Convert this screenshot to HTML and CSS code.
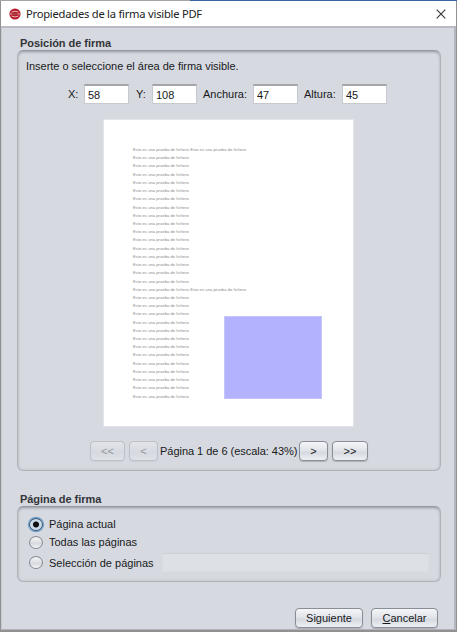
FILE: index.html
```html
<!DOCTYPE html>
<html lang="es">
<head>
<meta charset="utf-8">
<title>Propiedades de la firma visible PDF</title>
<link rel="stylesheet" href="styles.css">
</head>
<body>
<div class="window">
  <header class="titlebar">
    <svg class="logo" width="12" height="12" viewBox="0 0 12 12">
      <circle cx="6" cy="6" r="5.6" fill="#b51d2b"/>
      <path d="M2.6 4.1Q6 2.3 9.4 4.1M1 6H11M2.6 8.1Q6 9.7 9.4 8.1" fill="none" stroke="#f0c4c8" stroke-width=".9"/>
      <path d="M3 6H9" stroke="#8e1320" stroke-width="1"/>
    </svg>
    <h1 class="title">Propiedades de la firma visible PDF</h1>
    <svg class="close" width="10" height="10" viewBox="0 0 10 10"><path d="M.7.7 9.3 9.3M9.3.7.7 9.3" stroke="#333" stroke-width="1.1"/></svg>
  </header>
  <main class="content">
    <h2 class="legend">Posición de firma</h2>
    <section class="panel position">
      <p class="hint">Inserte o seleccione el área de firma visible.</p>
      <div class="fields">
        <label class="lx">X:</label><input value="58">
        <label class="ly">Y:</label><input value="108">
        <label class="lw">Anchura:</label><input value="47">
        <label class="lh">Altura:</label><input value="45">
      </div>
      <div class="page">
        <div class="lines" id="lines"></div>
        <div class="signature"></div>
      </div>
      <div class="pager">
        <button class="first" disabled>&lt;&lt;</button>
        <button class="prev" disabled>&lt;</button>
        <span class="status">Página 1 de 6 (escala: 43%)</span>
        <button class="next">&gt;</button>
        <button class="last">&gt;&gt;</button>
      </div>
    </section>
    <h2 class="legend second">Página de firma</h2>
    <section class="panel choice">
      <label class="option"><i class="radio on"></i><span>Página actual</span></label>
      <label class="option"><i class="radio"></i><span>Todas las páginas</span></label>
      <label class="option last-option"><i class="radio"></i><span>Selección de páginas</span><input class="range" disabled></label>
    </section>
    <footer class="actions">
      <button class="go">Siguiente</button>
      <button class="cancel"><u>C</u>ancelar</button>
    </footer>
  </main>
</div>
<script src="lines.js"></script>
</body>
</html>
```
FILE: lines.js
```js
const sentence = "Esto es una prueba de fichero";
const box = document.getElementById("lines");
for (let i = 0; i < 31; i++) {
  const row = document.createElement("p");
  row.className = "line";
  const copies = i === 0 || i === 17 ? 2 : 1;
  for (let c = 0; c < copies; c++) {
    const s = document.createElement("span");
    s.textContent = sentence;
    row.appendChild(s);
  }
  box.appendChild(row);
}
```
FILE: styles.css
```css
* { box-sizing: border-box; }
html, body { margin: 0; height: 100%; overflow: hidden; }
body { font: 11px/14px "Liberation Sans", Arial, sans-serif; color: #18191b; background: #d6d9e0; }
h1, h2, p { margin: 0; font-size: inherit; white-space: nowrap; }
.window { height: 632px; display: flex; flex-direction: column; padding: 1px 1px 2px; background: linear-gradient(90deg, #a4a4a4 190px, #3864a6 190px) top / 100% 1px no-repeat, #919191; }
.titlebar { height: 25px; flex: none; display: flex; align-items: center; padding: 0 10px 0 8px; background: #fff; }
.logo { flex: none; }
.title { margin-left: 5px; font: 11.2px/16px "Noto Sans", sans-serif; letter-spacing: -.24px; color: #222; flex: 1; }
.close { flex: none; }
.content { flex: 1; margin: 0; display: flex; flex-direction: column; background: #d6d9e0; border: 1px solid #b0b3bb; border-left-color: #c5c8cf; border-top: 2px solid #b9bbc2; border-right: 2px solid #b4b7be; padding: 0 14px; }
.legend { font-weight: bold; font-size: 11px; line-height: 14px; letter-spacing: -.04px; color: #333538; margin: 8px 0 0 4px; }
.panel { flex: none; border: 1px solid #b0b3b8; border-top-color: #96999f; border-radius: 6px; box-shadow: inset 0 2px 3px -1px #999ca3, inset 0 0 3px #bbbec4; margin: 0 0 0 1px; width: 424px; }
.position { height: 421px; padding: 8px 9px 0 8px; }
.hint { line-height: 14px; letter-spacing: -.03px; }
.fields { display: flex; align-items: center; margin: 11px 0 0 42px; height: 20px; }
.fields label { flex: none; white-space: nowrap; }
.lx { width: 16px; } .ly { width: 16px; margin-left: 7px; } .lw { width: 50px; margin-left: 6px; } .lh { width: 38px; margin-left: 6px; }
input { font: inherit; color: inherit; width: 45px; height: 20px; padding: 0 3px; border: 1px solid #c6c9ce; border-top: 2px solid #a3a5aa; border-radius: 0; background: #fff; outline: 0; }
.page { width: 251px; height: 308px; margin: 15px 0 0 77px; background: #fff; border: 1px solid #e3e5ea; position: relative; }
.lines { padding: 26px 0 0 29px; }
.line { display: flex; gap: 1.3px; height: 8.22px; font-size: 4.2px; line-height: 8.22px; color: #8c8c8c; }
.signature { position: absolute; left: 120px; top: 196px; width: 98px; height: 83px; background: #b2b2ff; border: 1px solid #c5c5fa; }
.pager { display: flex; align-items: center; margin: 14px 0 0 64px; height: 20px; }
button { flex: none; font: inherit; color: inherit; padding: 0; height: 20px; border: 1px solid #898d95; border-radius: 4px; background: linear-gradient(#f5f6f8, #e0e3e8 48%, #d6d9e0 58%, #edf0f3); box-shadow: 0 1px 1px #aeb1b8; white-space: nowrap; }
button:disabled { color: #94979d; border-color: #bdc0c8; background: linear-gradient(#e2e4e8, #d6d9e0 60%, #dfe2e7); box-shadow: 0 1px 1px #cbced4; }
.first { width: 35px; } .prev { width: 29px; margin-left: 4px; } .status { width: 138px; margin-left: 2px; white-space: nowrap; letter-spacing: -.03px; } .next { width: 29px; margin-left: 1px; } .last { width: 36px; margin-left: 4px; }
.second { margin-top: 21px; }
.choice { height: 76px; padding: 8px 11px 0 11px; }
.option { display: flex; align-items: center; height: 18px; white-space: nowrap; }
.radio { flex: none; width: 14px; height: 13px; border-radius: 50%; border: 1px solid #858991; background: linear-gradient(#f6f7f8, #d6d9df 60%, #f3f4f6); margin-right: 6px; }
.radio.on { border-color: #35536f; background: radial-gradient(circle, #111 0 2.6px, #c3d4e4 3.4px, #e7eef5); box-shadow: 0 0 0 1.2px #73a4d1; }
.last-option { height: 23px; }
.range { margin-left: auto; width: 267px; height: 19px; background: #dde0e5; border: 1px solid #d9dce1; border-top-color: #cdd0d6; }
.actions { display: flex; justify-content: flex-end; gap: 8px; margin: 26px 2px 0 0; }
.go { width: 68px; } .cancel { width: 67px; }
```
